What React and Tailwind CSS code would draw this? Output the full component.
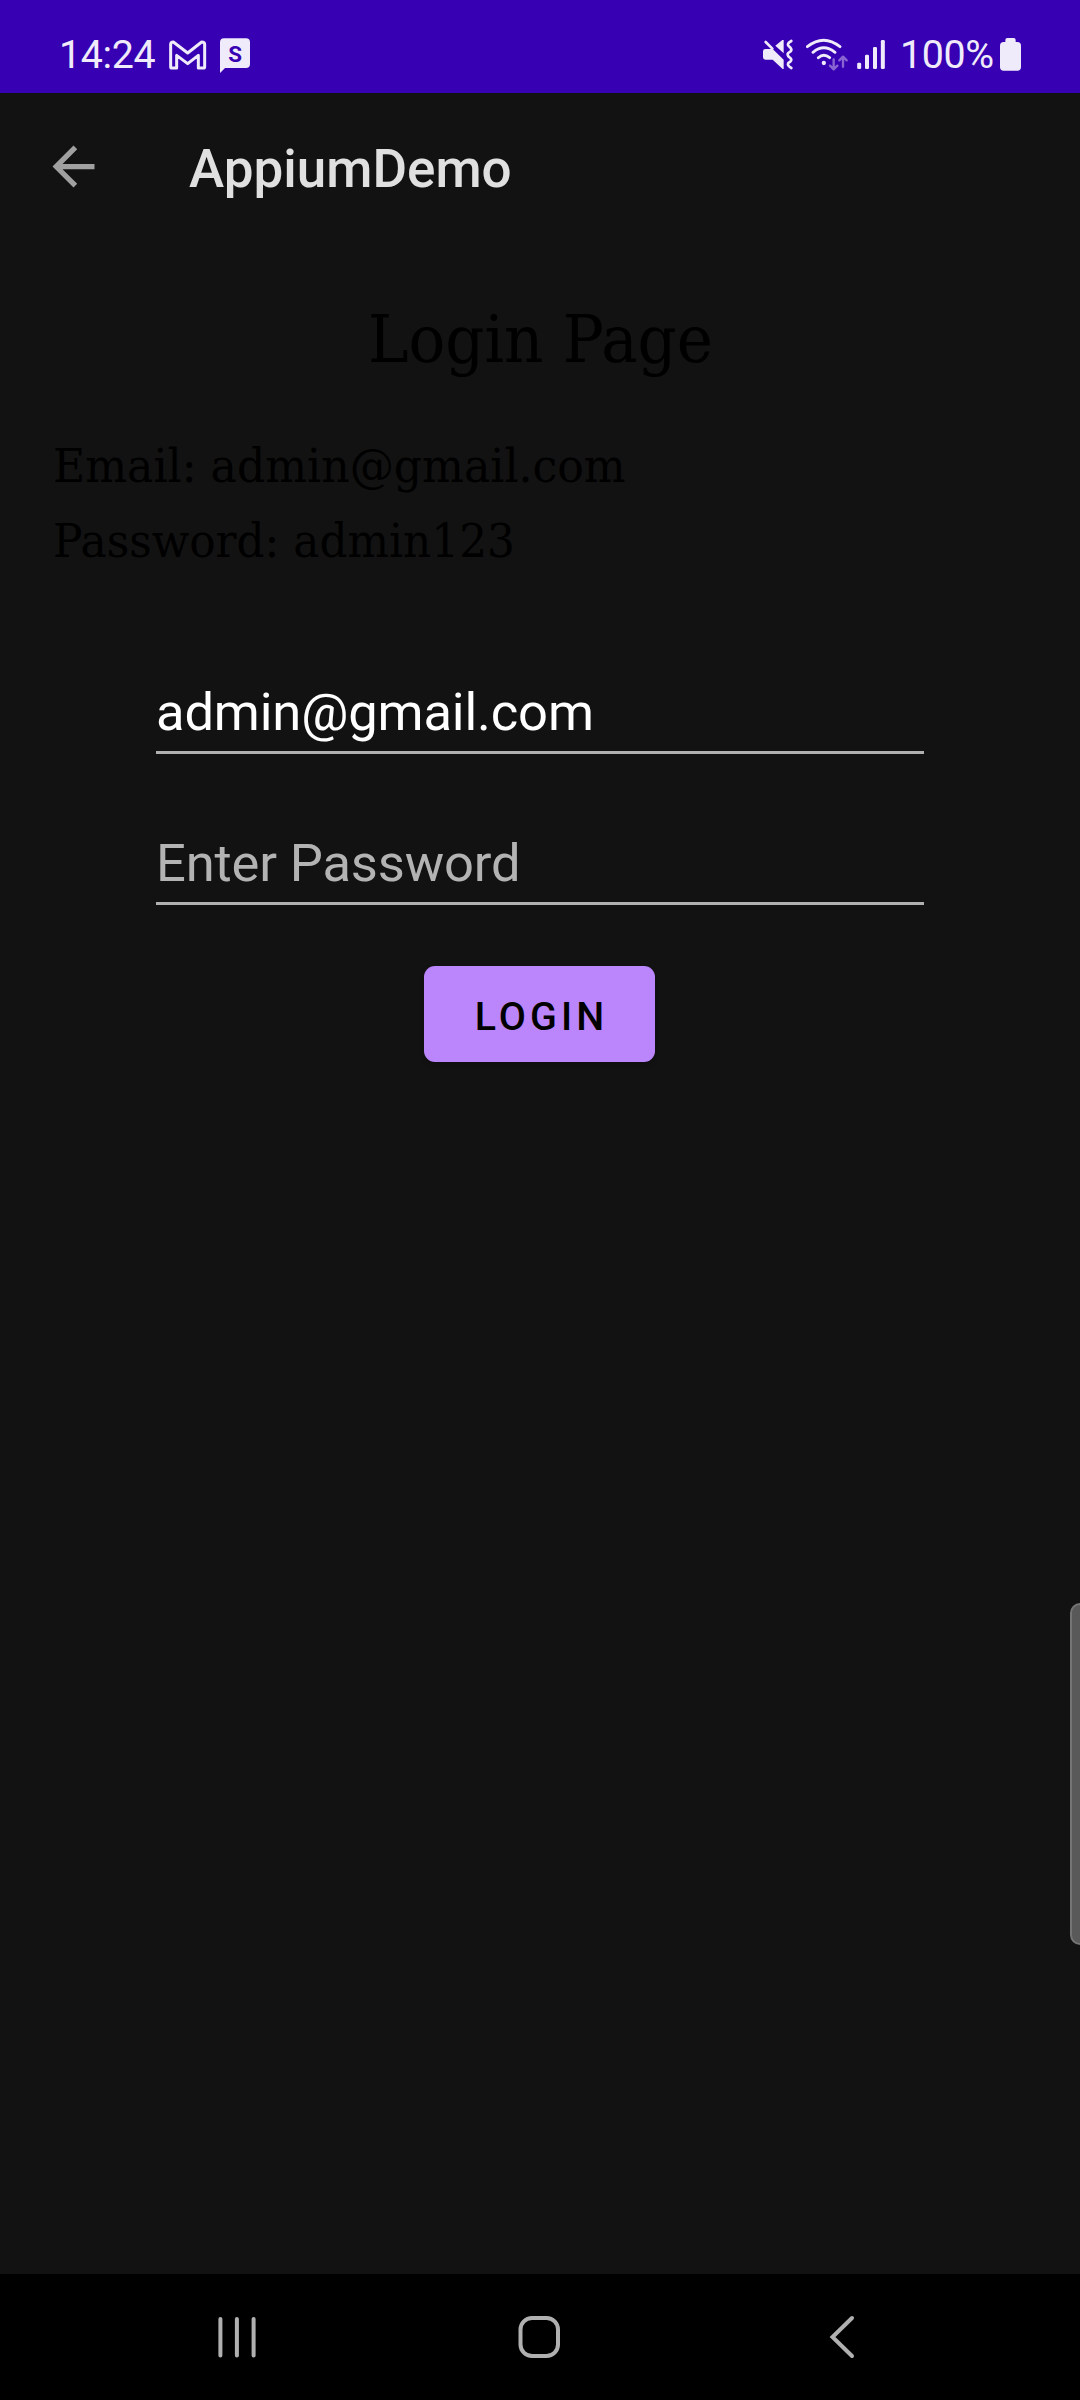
const INK = '#f0ebfa';

function StatusBar() {
  return (
    <header className="flex h-[93px] shrink-0 items-center bg-[#3700b3] pl-[59px] text-[39.4px] leading-[93px] text-[#f0ebfa]">
      <span className="h-[93px] w-[109px] whitespace-nowrap pt-[8px] tracking-[-0.35px]">14:24</span>
      <svg className="h-[93px] w-[39px]" viewBox="384 -60 117 279" fill="none">
        <path d="M392 73 Q392 66 400 66 L443 99 L485 66 Q494 66 494 73 V140 Q494 144 490 144 H475 V106 L443 131 L410 106 V144 H396 Q392 144 392 140 Z" stroke={INK} strokeWidth="9" strokeLinejoin="round" />
      </svg>
      <svg className="ml-[11px] h-[93px] w-[34px]" viewBox="534 -60 102 279">
        <path d="M540 67 Q540 55 552 55 H618 Q630 55 630 67 V132 Q630 144 618 144 H555 L540 159 Z" fill={INK} />
        <text x="585.5" y="126" textAnchor="middle" fontSize="67" fontWeight="700" fill="#3700b3">S</text>
      </svg>
      <svg className="ml-[510px] h-[93px] w-[32px]" viewBox="66 -60 96 279" fill="none">
        <path d="M77 66 L97 86" stroke={INK} strokeWidth="8" strokeLinecap="round" />
        <path d="M76 87 H98 L131 119 V147 H128 L98 119 H76 Q69 119 69 112 V94 Q69 87 76 87 Z M106 77 L127 60 H131 V100 Z" fill={INK} />
        <path d="M154 63 Q140 71 145 77 L152 84 Q156 89 152 94 L145 99 Q141 103 145 109 L152 115 Q156 120 151 125 L145 129 Q140 136 154 144" stroke={INK} strokeWidth="8" strokeLinecap="round" />
      </svg>
      <svg className="ml-[12px] h-[93px] w-[42px]" viewBox="198 -60 126 279" fill="none" strokeLinecap="round" strokeLinejoin="round">
        <path d="M202 80 Q251 41 300 80 M219 97 Q251 70 285 97 M235 113 Q251 98 269 113" stroke={INK} strokeWidth="8.5" />
        <circle cx="251.5" cy="129" r="6.5" fill={INK} />
        <path d="M281 118 V147 M270 137 L281 148 L292 137 M309 140 V111 M298 121 L309 110 L320 121" stroke="#8a66d2" strokeWidth="7" />
      </svg>
      <svg className="ml-[8px] h-[93px] w-[30px]" viewBox="348 -60 90 279" fill={INK}>
        <rect x="351.500" y="128" width="12" height="19" rx="4" />
        <rect x="375" y="104" width="12" height="43" rx="4" />
        <rect x="399" y="81" width="12" height="66" rx="4" />
        <rect x="422.500" y="60" width="12" height="87" rx="4" />
      </svg>
      <span className="ml-[14px] h-[93px] w-[99px] whitespace-nowrap pt-[8px] tracking-[-0.35px]">100%</span>
      <svg className="h-[93px] w-[23px]" viewBox="777 -60 69 279" fill={INK}>
        <rect x="796" y="54" width="31" height="30" rx="6" />
        <rect x="780" y="66" width="63" height="86" rx="11" />
      </svg>
    </header>
  );
}

function AppBar() {
  return (
    <div className="flex h-[147px] shrink-0 items-center pl-[42px]">
      <svg className="size-[63px]" viewBox="0 0 24 24" fill="#a0a0a0">
        <path d="M20 11H7.830l5.590-5.590L12 4l-8 8 8 8 1.410-1.410L7.830 13H20v-2z" />
      </svg>
      <h1 className="ml-[84px] pt-[4px] text-[53px] font-medium leading-[62px] text-[#e0e0e0]">AppiumDemo</h1>
    </div>
  );
}

function Field({ children, tone }) {
  return (
    <div className={`flex h-[75px] w-[768px] items-start border-b-[3px] border-[#b0b0b0] text-[52.5px] leading-[66px] tracking-[-0.15px] ${tone}`}>
      {children}
    </div>
  );
}

function LoginPage() {
  return (
    <main className="flex flex-1 flex-col">
      <div className="flex justify-center pt-[60px] font-['DejaVu_Serif'] text-[65px] leading-[80px] text-black">
        <h2 className="origin-center scale-x-[0.94] whitespace-nowrap">Login Page</h2>
      </div>
      <div className="flex flex-col items-start pl-[53px] pt-[49px] font-['DejaVu_Serif'] text-[46px] leading-[75px] text-black">
        <p className="origin-left scale-x-[0.96] whitespace-nowrap">Email: admin@gmail.com</p>
        <p className="origin-left scale-x-[0.953] whitespace-nowrap">Password: admin123</p>
      </div>
      <form className="flex flex-col items-center pt-[100px]" onSubmit={(e) => e.preventDefault()}>
        <Field tone="text-white">admin@gmail.com</Field>
        <div className="h-[76px]" />
        <Field tone="text-[#b3b3b3]">Enter Password</Field>
        <button type="submit" className="mr-px mt-[61px] h-[96px] w-[231px] rounded-[11px] bg-[#bb86fc] pl-[4px] pt-[6px] text-[39.4px] font-medium leading-[60px] tracking-[4.1px] text-black shadow-[0_2px_4px_rgba(0,0,0,0.25)]">
          LOGIN
        </button>
      </form>
    </main>
  );
}

function NavigationBar() {
  return (
    <nav className="flex h-[126px] shrink-0 items-center bg-black pl-[216px]">
      <svg className="h-[46px] w-[42px]" viewBox="216 2314 42 46" stroke="#b0b0b0" strokeWidth="4" strokeLinecap="round">
        <path d="M220.400 2319V2355.500M236.900 2319V2355.500M253.600 2319V2355.500" />
      </svg>
      <svg className="ml-[258px] h-[46px] w-[46px]" viewBox="516 2314 46 46" fill="none" stroke="#b0b0b0" strokeWidth="4">
        <rect x="520.500" y="2318" width="37.500" height="38" rx="11.500" />
      </svg>
      <svg className="ml-[266px] h-[46px] w-[30px]" viewBox="828 2314 30 46" fill="none" stroke="#b0b0b0" strokeWidth="4" strokeLinecap="round">
        <path d="M852 2318L832.500 2337L852 2356" />
      </svg>
    </nav>
  );
}

export default function App() {
  return (
    <div className="relative flex h-[2400px] w-[1080px] flex-col overflow-hidden bg-[#121212] font-[Roboto,sans-serif]">
      <StatusBar />
      <AppBar />
      <LoginPage />
      <NavigationBar />
      <div className="absolute right-0 top-[1603px] h-[342px] w-[10px] rounded-l-[10px] border-y-2 border-l-2 border-[#757575] bg-[#595959]" />
    </div>
  );
}
